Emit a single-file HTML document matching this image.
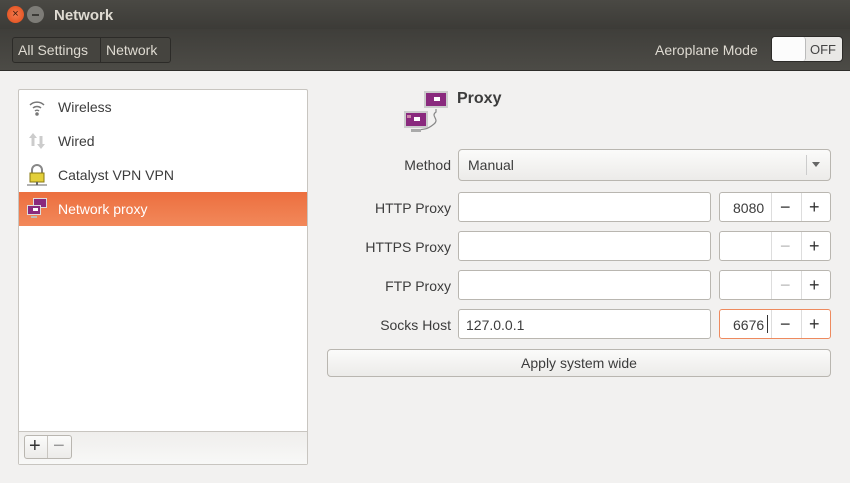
<!DOCTYPE html>
<html><head><style>
*{box-sizing:border-box;margin:0;padding:0}
body{width:850px;height:483px;background:#f2f1f0;font-family:"Liberation Sans","DejaVu Sans",sans-serif;font-size:14px;color:#3c3c3c;position:relative;overflow:hidden}
.abs{position:absolute}
#title{left:0;top:0;width:850px;height:29px;background:linear-gradient(#4a4944,#3c3b37);}
#tool{left:0;top:29px;width:850px;height:42px;background:linear-gradient(#3f3e3a,#4c4b46);border-bottom:1px solid #2e2d2a}
.tb{color:#dfdbd2}
.field{background:#fff;border:1px solid #b9b6b0;border-radius:3px}
.lbl{text-align:right;width:140px;left:311px;color:#3c3c3c}
.btn{background:linear-gradient(#fbfbfa,#ecebe9);border:1px solid #b9b6b0;border-radius:3px}
</style></head><body>
<div id="title" class="abs">
 <div class="abs" style="left:7px;top:6px;width:17px;height:17px;border-radius:50%;background:radial-gradient(#f47a4f,#df4a16);color:#3a1a0a;font-size:11px;text-align:center;line-height:17px">×</div>
 <div class="abs" style="left:27px;top:6px;width:17px;height:17px;border-radius:50%;background:#7d7c77;"><div class="abs" style="left:5px;top:8px;width:7px;height:1.5px;background:#3c3b37"></div></div>
 <div class="abs tb" style="left:54px;top:7px;font-weight:bold;font-size:15px">Network</div>
</div>
<div id="tool" class="abs">
 <div class="abs" style="left:12px;top:8px;width:159px;height:26px;border:1px solid #2c2b28;border-radius:3px;background:#45443f"></div>
 <div class="abs" style="left:100px;top:9px;width:1px;height:24px;background:#2c2b28"></div>
 <div class="abs tb" style="left:18px;top:13px">All Settings</div>
 <div class="abs tb" style="left:106px;top:13px">Network</div>
 <div class="abs tb" style="left:655px;top:13px">Aeroplane Mode</div>
 <div class="abs" style="left:771px;top:7px;width:72px;height:26px;border:1px solid #2c2b28;border-radius:4px;background:#e9e8e6"></div>
 <div class="abs" style="left:772px;top:8px;width:34px;height:24px;border-radius:3px;background:#fcfcfc;border-right:1px solid #bbb"></div>
 <div class="abs" style="left:810px;top:13px;color:#444;font-size:13px">OFF</div>
</div>
<!-- list -->
<div class="abs" style="left:18px;top:89px;width:290px;height:376px;background:#fff;border:1px solid #c8c5c0;border-radius:2px"></div>
<div class="abs" style="left:19px;top:431px;width:288px;height:33px;background:linear-gradient(#efeeec,#f8f8f7);border-top:1px solid #c8c5c0"></div>
<div class="abs btn" style="left:24px;top:435px;width:48px;height:24px"></div>
<div class="abs" style="left:47px;top:436px;width:1px;height:22px;background:#c8c5c0"></div>
<div class="abs" style="left:29px;top:436px;font-size:20px;line-height:20px;color:#333">+</div>
<div class="abs" style="left:53px;top:436px;font-size:20px;line-height:20px;color:#999">−</div>
<svg class="abs" style="left:27px;top:97px" width="20" height="20" viewBox="0 0 20 20" fill="none" stroke="#777" stroke-width="1.5"><path d="M3 8a10 10 0 0 1 14 0M6 11a6 6 0 0 1 8 0M8 14a3 3 0 0 1 4 0"/><circle cx="10" cy="17" r="1" fill="#777"/></svg>
<div class="abs" style="left:58px;top:99px">Wireless</div>
<svg class="abs" style="left:27px;top:131px" width="20" height="20" viewBox="0 0 20 20" fill="#ccc"><path d="M2 7l4-5 4 5H7.5v8h-3V7z"/><path d="M10 13l4 5 4-5h-2.5V5h-3v8z"/></svg>
<div class="abs" style="left:58px;top:133px">Wired</div>
<svg class="abs" style="left:26px;top:163px" width="22" height="24" viewBox="0 0 22 24"><path d="M6 10V7a5 5 0 0 1 10 0v3" fill="none" stroke="#888" stroke-width="2"/><rect x="4" y="10" width="14" height="9" fill="#e3cf3a" stroke="#8a7a10"/><path d="M1 22h20" stroke="#666"/><rect x="10" y="19" width="2" height="3" fill="#666"/></svg>
<div class="abs" style="left:58px;top:167px">Catalyst VPN VPN</div>
<div class="abs" style="left:19px;top:192px;width:288px;height:34px;background:linear-gradient(#ec6f3f,#f2885a)"></div>
<svg class="abs" style="left:25px;top:197px" width="24" height="24" viewBox="0 0 24 24"><rect x="8" y="1" width="14" height="10" fill="#ddd"/><rect x="9" y="2" width="12" height="8" fill="#8a2a7e"/><rect x="2" y="8" width="14" height="10" fill="#ddd"/><rect x="3" y="9" width="12" height="8" fill="#8a2a7e"/><rect x="8" y="11" width="5" height="3" fill="#fff"/><rect x="6" y="19" width="6" height="2" fill="#bbb"/></svg>
<div class="abs" style="left:58px;top:201px;color:#fff">Network proxy</div>
<!-- right -->
<svg class="abs" style="left:403px;top:90px" width="46" height="46" viewBox="0 0 46 46"><rect x="21" y="1" width="24" height="17" fill="#ccc"/><rect x="23" y="3" width="20" height="13" fill="#8a2a7e"/><rect x="31" y="7" width="6" height="4" fill="#fff"/><rect x="1" y="21" width="24" height="17" fill="#ccc"/><rect x="3" y="23" width="20" height="13" fill="#8a2a7e"/><rect x="11" y="27" width="6" height="4" fill="#fff"/><rect x="4" y="25" width="4" height="3" fill="#c8a"/><path d="M33 19v3c-6 4 4 7-2 12s-8 5-17 6" stroke="#888" fill="none" stroke-width="1.2"/><rect x="8" y="39" width="10" height="3" fill="#aaa"/></svg>
<div class="abs" style="left:457px;top:90px;font-weight:bold;font-size:16px">Proxy</div>
<div class="abs lbl" style="top:157px">Method</div>
<div class="abs btn" style="left:458px;top:149px;width:373px;height:32px;border-radius:4px"></div>
<div class="abs" style="left:806px;top:155px;width:1px;height:20px;background:#ccc"></div>
<div class="abs" style="left:812px;top:162px;width:0;height:0;border-left:4px solid transparent;border-right:4px solid transparent;border-top:5px solid #666"></div>
<div class="abs" style="left:468px;top:157px">Manual</div>

<div class="abs lbl" style="top:200px">HTTP Proxy</div>
<div class="abs field" style="left:458px;top:192px;width:253px;height:30px"></div>
<div class="abs field" style="left:719px;top:192px;width:112px;height:30px"></div>
<div class="abs" style="left:771px;top:193px;width:1px;height:28px;background:#ddd"></div><div class="abs" style="left:801px;top:193px;width:1px;height:28px;background:#ddd"></div>
<div class="abs" style="left:733px;top:200px">8080</div>
<div class="abs" style="left:780px;top:197px;font-size:18px;color:#333">−</div><div class="abs" style="left:809px;top:197px;font-size:18px;color:#333">+</div>

<div class="abs lbl" style="top:239px">HTTPS Proxy</div>
<div class="abs field" style="left:458px;top:231px;width:253px;height:30px"></div>
<div class="abs field" style="left:719px;top:231px;width:112px;height:30px"></div>
<div class="abs" style="left:771px;top:232px;width:1px;height:28px;background:#ddd"></div><div class="abs" style="left:801px;top:232px;width:1px;height:28px;background:#ddd"></div>
<div class="abs" style="left:780px;top:236px;font-size:18px;color:#bbb">−</div><div class="abs" style="left:809px;top:236px;font-size:18px;color:#333">+</div>

<div class="abs lbl" style="top:278px">FTP Proxy</div>
<div class="abs field" style="left:458px;top:270px;width:253px;height:30px"></div>
<div class="abs field" style="left:719px;top:270px;width:112px;height:30px"></div>
<div class="abs" style="left:771px;top:271px;width:1px;height:28px;background:#ddd"></div><div class="abs" style="left:801px;top:271px;width:1px;height:28px;background:#ddd"></div>
<div class="abs" style="left:780px;top:275px;font-size:18px;color:#bbb">−</div><div class="abs" style="left:809px;top:275px;font-size:18px;color:#333">+</div>

<div class="abs lbl" style="top:317px">Socks Host</div>
<div class="abs field" style="left:458px;top:309px;width:253px;height:30px"></div>
<div class="abs" style="left:466px;top:317px">127.0.0.1</div>
<div class="abs field" style="left:719px;top:309px;width:112px;height:30px;border-color:#ee8a5e"></div>
<div class="abs" style="left:771px;top:310px;width:1px;height:28px;background:#ddd"></div><div class="abs" style="left:801px;top:310px;width:1px;height:28px;background:#ddd"></div>
<div class="abs" style="left:733px;top:317px">6676</div>
<div class="abs" style="left:767px;top:315px;width:1px;height:18px;background:#333"></div>
<div class="abs" style="left:780px;top:314px;font-size:18px;color:#333">−</div><div class="abs" style="left:809px;top:314px;font-size:18px;color:#333">+</div>

<div class="abs btn" style="left:327px;top:349px;width:504px;height:28px;border-radius:4px"></div>
<div class="abs" style="left:327px;top:355px;width:504px;text-align:center">Apply system wide</div>
</body></html>
